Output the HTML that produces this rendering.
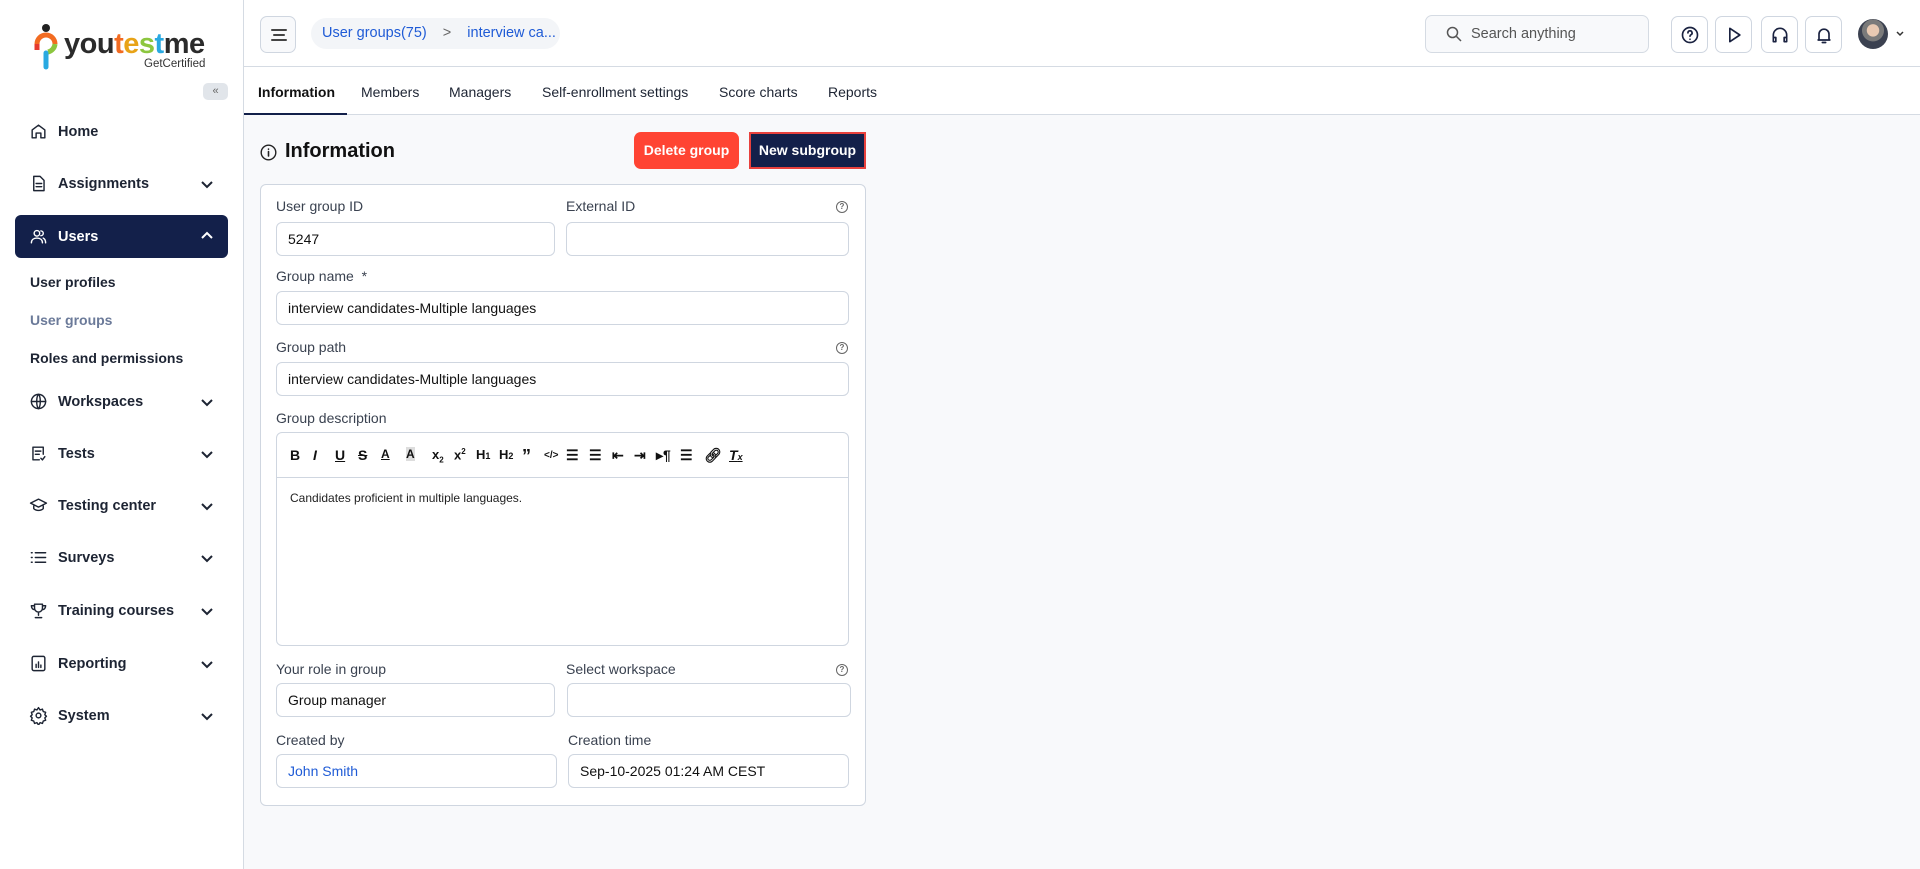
<!DOCTYPE html>
<html><head><meta charset="utf-8"><style>
*{box-sizing:border-box;margin:0;padding:0}
body{width:1920px;height:869px;overflow:hidden;font-family:"Liberation Sans",sans-serif;background:#f8f9fb;color:#111;position:relative}
.a{position:absolute}
#side{left:0;top:0;width:244px;height:869px;background:#fff;border-right:1px solid #d5dbe3}
#top{left:244px;top:0;width:1676px;height:67px;background:#fff;border-bottom:1px solid #d5dbe3}
#tabs{left:244px;top:67px;width:1676px;height:48px;background:#fff;border-bottom:1px solid #d5dbe3}
.tab{position:absolute;top:17px;font-size:14px;color:#1d2433}
.nav{position:absolute;left:29px;font-size:14.5px;font-weight:bold;color:#1d2433;display:flex;align-items:center;width:190px}
.nav svg{width:19px;height:19px;margin-right:10px;fill:none;stroke:#1d2433;stroke-width:1.8;stroke-linecap:round;stroke-linejoin:round}
.chev{position:absolute;left:200px;width:14px;height:14px;fill:none;stroke:#1d2433;stroke-width:2}
.sub{position:absolute;left:30px;font-size:14px;font-weight:bold;color:#1d2433}
.ib{position:absolute;top:16px;width:37px;height:37px;border:1px solid #cfd6e0;border-radius:7px;background:#fff;display:flex;align-items:center;justify-content:center}
.ib svg{width:20px;height:20px;fill:none;stroke:#1a2240;stroke-width:2;stroke-linecap:round;stroke-linejoin:round}
.lbl{position:absolute;font-size:14px;color:#3a4250}
.inp{position:absolute;height:34px;border:1px solid #cfd6e0;border-radius:6px;background:#fff;font-size:14px;padding:0 11px;line-height:32px;color:#111}
.help{position:absolute;width:12px;height:12px;border:1.3px solid #666;border-radius:50%;font-size:8px;text-align:center;line-height:10px;color:#666;font-weight:bold}
.tb{position:absolute;top:447px;font-size:14px;font-weight:bold;color:#111}
</style></head><body>
<div id="side" class="a">
 <svg class="a" style="left:34px;top:24px" width="24" height="46" viewBox="0 0 24 46">
  <circle cx="12" cy="4" r="4" fill="#222"/>
  <path d="M3 20 a9 9 0 0 1 18 0" stroke="#f26b21" stroke-width="5" fill="none"/>
  <path d="M21 20 a9 9 0 0 1 -7 8" stroke="#8cc63f" stroke-width="5" fill="none"/>
  <path d="M3 20 v6" stroke="#e63a2e" stroke-width="5"/>
  <path d="M12 29 v14" stroke="#29a9e1" stroke-width="5" stroke-linecap="round"/>
 </svg>
 <div class="a" style="left:64px;top:28px;font-size:29px;font-weight:bold;letter-spacing:-0.5px;color:#2b2b2b">you<span style="color:#f26b21">t</span><span style="color:#e8a317">e</span><span style="color:#8cc63f">s</span><span style="color:#29a9e1">t</span>me</div>
 <div class="a" style="left:144px;top:58px;font-size:11.5px;color:#333">GetCertified</div>
 <div class="a" style="left:203px;top:83px;width:25px;height:17px;background:#e1e5ea;border-radius:5px;font-size:11px;color:#666;text-align:center;line-height:16px">«</div>

 <div class="nav" style="top:122px"><svg viewBox="0 0 24 24"><path d="M4 20V10l8-6 8 6v10h-5v-6h-6v6z"/></svg>Home</div>
 <div class="nav" style="top:174px"><svg viewBox="0 0 24 24"><path d="M6 3h8l5 5v13H6z M9 12h7 M9 16h7"/></svg>Assignments</div>
 <svg class="chev" style="top:177px" viewBox="0 0 14 14"><path d="M2 5l5 5 5-5"/></svg>
 <div class="a" style="left:15px;top:215px;width:213px;height:43px;background:#13204a;border-radius:6px"></div>
 <div class="nav" style="top:227px;color:#fff"><svg viewBox="0 0 24 24" style="stroke:#fff"><circle cx="10" cy="8" r="3.5"/><path d="M3 20c0-4 3-6 7-6s7 2 7 6 M15 5a3 3 0 0 1 0 6 M18 14c2 1 3 3 3 6"/></svg>Users</div>
 <svg class="chev" style="top:229px;stroke:#fff" viewBox="0 0 14 14"><path d="M2 9l5-5 5 5"/></svg>
 <div class="sub" style="top:274px">User profiles</div>
 <div class="sub" style="top:312px;color:#6b7a99">User groups</div>
 <div class="sub" style="top:350px">Roles and permissions</div>
 <div class="nav" style="top:392px"><svg viewBox="0 0 24 24"><circle cx="12" cy="12" r="9"/><path d="M3 12h18 M12 3c3 3 3 15 0 18 M12 3c-3 3-3 15 0 18"/></svg>Workspaces</div>
 <svg class="chev" style="top:395px" viewBox="0 0 14 14"><path d="M2 5l5 5 5-5"/></svg>
 <div class="nav" style="top:444px"><svg viewBox="0 0 24 24"><path d="M13 20H5V4h13v9 M8 9h7 M8 13h5 M15 18l2 2 3-4"/></svg>Tests</div>
 <svg class="chev" style="top:447px" viewBox="0 0 14 14"><path d="M2 5l5 5 5-5"/></svg>
 <div class="nav" style="top:496px"><svg viewBox="0 0 24 24"><path d="M2 9l10-5 10 5-10 5z M6 11v5c3 3 9 3 12 0v-5"/></svg>Testing center</div>
 <svg class="chev" style="top:499px" viewBox="0 0 14 14"><path d="M2 5l5 5 5-5"/></svg>
 <div class="nav" style="top:548px"><svg viewBox="0 0 24 24"><path d="M8 6h13 M8 12h13 M8 18h13 M3 6h1 M3 12h1 M3 18h1"/></svg>Surveys</div>
 <svg class="chev" style="top:551px" viewBox="0 0 14 14"><path d="M2 5l5 5 5-5"/></svg>
 <div class="nav" style="top:601px"><svg viewBox="0 0 24 24"><path d="M7 4h10v5a5 5 0 0 1-10 0z M7 6H3c0 3 2 5 4 5 M17 6h4c0 3-2 5-4 5 M12 14v4 M8 21h8"/></svg>Training courses</div>
 <svg class="chev" style="top:604px" viewBox="0 0 14 14"><path d="M2 5l5 5 5-5"/></svg>
 <div class="nav" style="top:654px"><svg viewBox="0 0 24 24"><rect x="4" y="3" width="16" height="18" rx="2"/><path d="M9 17v-4 M12 17v-7 M15 17v-3"/></svg>Reporting</div>
 <svg class="chev" style="top:657px" viewBox="0 0 14 14"><path d="M2 5l5 5 5-5"/></svg>
 <div class="nav" style="top:706px"><svg viewBox="0 0 24 24"><circle cx="12" cy="12" r="3"/><path d="M12 2l2 3 3-1 1 3 3 1-1 3 2 2-2 2 1 3-3 1-1 3-3-1-2 3-2-3-3 1-1-3-3-1 1-3-2-2 2-2-1-3 3-1 1-3 3 1z"/></svg>System</div>
 <svg class="chev" style="top:709px" viewBox="0 0 14 14"><path d="M2 5l5 5 5-5"/></svg>
</div>

<div id="top" class="a">
 <div class="a" style="left:16px;top:16px;width:36px;height:37px;border:1px solid #cfd6e0;border-radius:7px;background:#f8f9fb">
  <svg width="36" height="36" viewBox="0 0 36 36"><path d="M11 13h14 M13 18h10 M11 23h14" stroke="#444" stroke-width="2" stroke-linecap="round"/></svg>
 </div>
 <div class="a" style="left:67px;top:18px;width:249px;height:31px;background:#f3f5f8;border-radius:16px;font-size:14.5px;line-height:31px;padding-left:11px;color:#1f5bd6">User groups(75) <span style="color:#666;margin:0 12px">&gt;</span> interview ca...</div>
 <div class="a" style="left:1181px;top:15px;width:224px;height:38px;border:1px solid #d5dbe3;border-radius:7px;background:#f8f9fb">
  <svg class="a" style="left:20px;top:10px" width="16" height="16" viewBox="0 0 16 16"><circle cx="6.5" cy="6.5" r="5" fill="none" stroke="#555" stroke-width="1.5"/><path d="M10.5 10.5L15 15" stroke="#555" stroke-width="1.5"/></svg>
  <div class="a" style="left:45px;top:10px;font-size:14.5px;color:#555">Search anything</div>
 </div>
 <div class="ib" style="left:1427px"><svg viewBox="0 0 24 24"><circle cx="12" cy="12" r="9"/><path d="M9.5 9.5a2.5 2.5 0 1 1 3.5 2.3c-.7.4-1 .9-1 1.7 M12 17v.1"/></svg></div>
 <div class="ib" style="left:1471px"><svg viewBox="0 0 24 24"><path d="M7 4l12 8-12 8z"/></svg></div>
 <div class="ib" style="left:1517px"><svg viewBox="0 0 24 24"><path d="M4 17v-5a8 8 0 0 1 16 0v5 M4 15h3v5H4z M17 15h3v5h-3z"/></svg></div>
 <div class="ib" style="left:1561px"><svg viewBox="0 0 24 24"><path d="M6 17V11a6 6 0 0 1 12 0v6l1 1H5z M10 21h4"/></svg></div>
 <div class="a" style="left:1614px;top:19px;width:30px;height:30px;border-radius:50%;background:radial-gradient(circle at 50% 38%,#e8c9b2 0 25%,#7a7a7a 27% 45%,#3b4150 47%)"></div>
 <svg class="a" style="left:1651px;top:30px" width="10" height="8" viewBox="0 0 10 8"><path d="M2 2l3 3 3-3" fill="none" stroke="#333" stroke-width="1.5"/></svg>
</div>

<div id="tabs" class="a">
 <div class="tab" style="left:14px;font-weight:bold;color:#111">Information</div>
 <div class="tab" style="left:117px">Members</div>
 <div class="tab" style="left:205px">Managers</div>
 <div class="tab" style="left:298px">Self-enrollment settings</div>
 <div class="tab" style="left:475px">Score charts</div>
 <div class="tab" style="left:584px">Reports</div>
 <div class="a" style="left:0;top:46px;width:103px;height:2px;background:#13204a"></div>
</div>

<svg class="a" style="left:260px;top:144px" width="17" height="17" viewBox="0 0 17 17"><circle cx="8.5" cy="8.5" r="7.3" fill="none" stroke="#222" stroke-width="1.4"/><path d="M8.5 7.5v4.5 M8.5 5v.2" stroke="#222" stroke-width="1.6" stroke-linecap="round"/></svg>
<div class="a" style="left:285px;top:140px;font-size:20px;font-weight:bold;color:#111">Information</div>
<div class="a" style="left:634px;top:132px;width:105px;height:37px;background:#ff4433;border-radius:7px;color:#fff;font-size:14px;font-weight:bold;text-align:center;line-height:37px">Delete group</div>
<div class="a" style="left:749px;top:132px;width:117px;height:37px;background:#13204a;border:2px solid #e8413d;color:#fff;font-size:14px;font-weight:bold;text-align:center;line-height:33px">New subgroup</div>

<div class="a" style="left:260px;top:184px;width:606px;height:622px;background:#fff;border:1px solid #cfd6e0;border-radius:6px"></div>
<div class="lbl" style="left:276px;top:198px">User group ID</div>
<div class="lbl" style="left:566px;top:198px">External ID</div>
<div class="help" style="left:836px;top:201px">?</div>
<div class="inp" style="left:276px;top:222px;width:279px">5247</div>
<div class="inp" style="left:566px;top:222px;width:283px"></div>
<div class="lbl" style="left:276px;top:268px">Group name &nbsp;*</div>
<div class="inp" style="left:276px;top:291px;width:573px">interview candidates-Multiple languages</div>
<div class="lbl" style="left:276px;top:339px">Group path</div>
<div class="help" style="left:836px;top:342px">?</div>
<div class="inp" style="left:276px;top:362px;width:573px">interview candidates-Multiple languages</div>
<div class="lbl" style="left:276px;top:410px">Group description</div>
<div class="a" style="left:276px;top:432px;width:573px;height:214px;border:1px solid #cfd6e0;border-radius:6px;background:#fff"></div>
<div class="a" style="left:277px;top:477px;width:571px;height:1px;background:#cfd6e0"></div>
<div class="tb" style="left:290px">B</div>
<div class="tb" style="left:313px;font-style:italic">I</div>
<div class="tb" style="left:335px;text-decoration:underline">U</div>
<div class="tb" style="left:358px;text-decoration:line-through">S</div>
<div class="tb" style="left:381px;text-decoration:underline;font-size:12px">A</div>
<div class="tb" style="left:406px;font-size:12px;background:#ddd">A</div>
<div class="tb" style="left:432px;font-size:13px">x<sub style="font-size:8px">2</sub></div>
<div class="tb" style="left:454px;font-size:13px">x<sup style="font-size:8px">2</sup></div>
<div class="tb" style="left:476px;font-size:13px">H<span style="font-size:9px">1</span></div>
<div class="tb" style="left:499px;font-size:13px">H<span style="font-size:9px">2</span></div>
<div class="tb" style="left:522px;font-size:18px;top:446px">”</div>
<div class="tb" style="left:544px;font-size:10px;top:450px">&lt;/&gt;</div>
<div class="tb" style="left:566px">☰</div>
<div class="tb" style="left:589px">☰</div>
<div class="tb" style="left:612px">⇤</div>
<div class="tb" style="left:634px">⇥</div>
<div class="tb" style="left:656px">▸¶</div>
<div class="tb" style="left:680px">☰</div>
<div class="tb" style="left:704px">🔗︎</div>
<div class="tb" style="left:729px;font-style:italic;text-decoration:underline">T<span style="font-size:9px">x</span></div>
<div class="a" style="left:290px;top:491px;font-size:12px;color:#222">Candidates proficient in multiple languages.</div>
<div class="lbl" style="left:276px;top:661px">Your role in group</div>
<div class="lbl" style="left:566px;top:661px">Select workspace</div>
<div class="help" style="left:836px;top:664px">?</div>
<div class="inp" style="left:276px;top:683px;width:279px">Group manager</div>
<div class="inp" style="left:567px;top:683px;width:284px"></div>
<div class="lbl" style="left:276px;top:732px">Created by</div>
<div class="lbl" style="left:568px;top:732px">Creation time</div>
<div class="inp" style="left:276px;top:754px;width:281px;color:#1f5bd6">John Smith</div>
<div class="inp" style="left:568px;top:754px;width:281px">Sep-10-2025 01:24 AM CEST</div>
</body></html>
